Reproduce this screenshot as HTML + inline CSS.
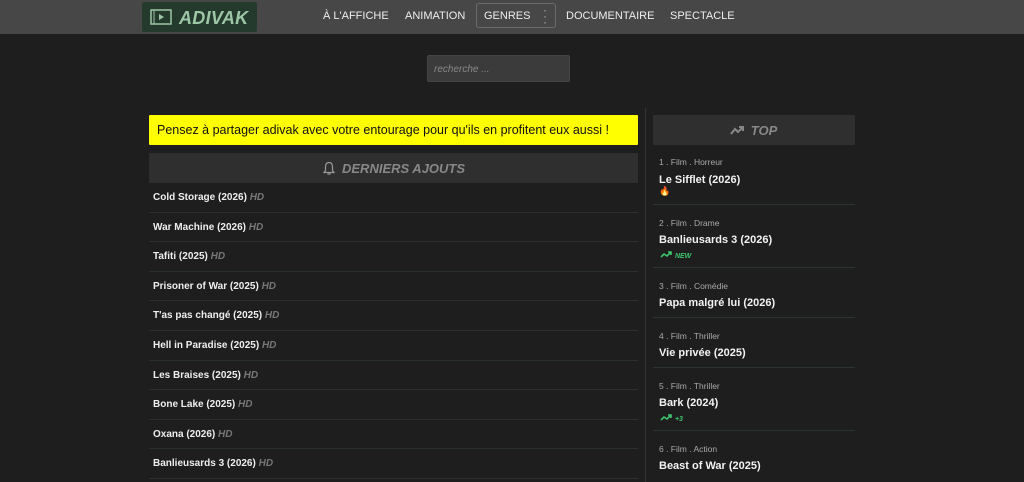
<!DOCTYPE html>
<html><head><meta charset="utf-8"><style>
*{margin:0;padding:0;box-sizing:border-box}
body{width:1024px;height:482px;overflow:hidden;background:#1e1e1e;font-family:"Liberation Sans",Arial,sans-serif;color:#eee;position:relative}
.hdr{position:absolute;left:0;top:0;width:1024px;height:34px;background:#474747}
.logo{position:absolute;left:142px;top:2px;width:115px;height:30px;background:#243a2d;border-radius:2px}
.logo .t{position:absolute;left:37px;top:6px;font-size:18px;font-weight:bold;font-style:italic;color:#9dc7a6;letter-spacing:.3px}
.nav{position:absolute;top:10px;font-size:11px;color:#eee}
.genres{position:absolute;left:476px;top:3px;width:80px;height:25px;border:1px solid #6a6a6a;border-radius:3px}
.search{position:absolute;left:427px;top:55px;width:143px;height:27px;background:#3b3b3b;border:1px solid #444;border-radius:2px;font-size:10px;font-style:italic;color:#888;padding:8px 6px}
.vline{position:absolute;left:645px;top:108px;width:1px;height:374px;background:#333}
.notice{position:absolute;left:149px;top:115px;width:489px;height:30px;background:#ffff00;color:#111;font-size:12.5px;padding:8px 8px;border-radius:1px}
.lh{position:absolute;left:149px;top:153px;width:489px;height:30px;background:#2f2f2f;color:#888;font-weight:bold;font-style:italic;font-size:13px;padding-top:8px}
.row{position:absolute;left:149px;width:489px;height:29.6px;border-bottom:1px solid #2a302c;font-size:10px;font-weight:bold;padding:9px 4px;color:#eee}
.row i{color:#777}
.th{position:absolute;left:653px;top:115px;width:202px;height:30px;background:#2f2f2f;color:#888;font-weight:bold;font-style:italic;font-size:13px;padding-top:8px;text-align:center}
.it{position:absolute;left:659px;font-size:8.5px;color:#aaa}
.tt{position:absolute;left:659px;font-size:11px;font-weight:bold;color:#f2f2f2}
.sep{position:absolute;left:653px;width:202px;height:1px;background:#2b3430}
.tag{position:absolute;left:660px;font-size:7px;font-weight:bold;font-style:italic;color:#3ec46d}
</style></head><body>
<div class="hdr">
 <div class="logo">
  <svg style="position:absolute;left:8px;top:7px" width="22" height="16"><rect x="1" y="1" width="20" height="14" fill="none" stroke="#9dc7a6" stroke-width="1.5"/><line x1="4" y1="1" x2="4" y2="15" stroke="#9dc7a6"/><path d="M9 5 L14 8 L9 11Z" fill="#9dc7a6"/></svg>
  <span class="t">ADIVAK</span>
 </div>
 <span class="nav" style="left:323px">À L'AFFICHE</span>
 <span class="nav" style="left:405px">ANIMATION</span>
 <div class="genres"><span class="nav" style="left:7px;top:6px">GENRES</span><span style="position:absolute;left:66px;top:3px;color:#aaa;font-size:12px;line-height:6px">·<br>·<br>·</span></div>
 <span class="nav" style="left:566px">DOCUMENTAIRE</span>
 <span class="nav" style="left:670px">SPECTACLE</span>
</div>
<div class="search">recherche ...</div>
<div class="vline"></div>
<div class="notice">Pensez à partager adivak avec votre entourage pour qu'ils en profitent eux aussi !</div>
<div class="lh"><svg style="position:absolute;left:174px;top:8px" width="12" height="15"><path d="M6 1.5 C3 1.5 2.5 4 2.5 6 L2.5 9.5 L1 11.5 L11 11.5 L9.5 9.5 L9.5 6 C9.5 4 9 1.5 6 1.5Z M4.5 13 L7.5 13" fill="none" stroke="#999" stroke-width="1.2"/></svg><span style="position:absolute;left:193px;top:8px">DERNIERS AJOUTS</span></div>
<div class="row" style="top:183px">Cold Storage (2026) <i>HD</i></div>
<div class="row" style="top:212.6px">War Machine (2026) <i>HD</i></div>
<div class="row" style="top:242.2px">Tafiti (2025) <i>HD</i></div>
<div class="row" style="top:271.8px">Prisoner of War (2025) <i>HD</i></div>
<div class="row" style="top:301.4px">T'as pas changé (2025) <i>HD</i></div>
<div class="row" style="top:331px">Hell in Paradise (2025) <i>HD</i></div>
<div class="row" style="top:360.6px">Les Braises (2025) <i>HD</i></div>
<div class="row" style="top:390.2px">Bone Lake (2025) <i>HD</i></div>
<div class="row" style="top:419.8px">Oxana (2026) <i>HD</i></div>
<div class="row" style="top:449.4px">Banlieusards 3 (2026) <i>HD</i></div>
<div class="th"><svg style="position:absolute;left:77px;top:10px" width="15" height="10"><path d="M1 9 L5 4 L8 7 L13 2 M9 2 L13 2 L13 6" fill="none" stroke="#888" stroke-width="2"/></svg><span style="margin-left:20px">TOP</span></div>
<div class="it" style="top:157px">1 . Film . Horreur</div><div class="tt" style="top:174px">Le Sifflet (2026)</div><div style="position:absolute;left:659px;top:186px;font-size:9px">🔥</div>
<div class="sep" style="top:204px"></div>
<div class="it" style="top:218px">2 . Film . Drame</div><div class="tt" style="top:234px">Banlieusards 3 (2026)</div><div class="tag" style="top:250px"><svg width="13" height="8"><path d="M1 7 L4 4 L7 6 L11 2 M8 2 L11 2 L11 5" fill="none" stroke="#3ec46d" stroke-width="1.6"/></svg> NEW</div>
<div class="sep" style="top:267px"></div>
<div class="it" style="top:281px">3 . Film . Comédie</div><div class="tt" style="top:297px">Papa malgré lui (2026)</div>
<div class="sep" style="top:317px"></div>
<div class="it" style="top:331px">4 . Film . Thriller</div><div class="tt" style="top:347px">Vie privée (2025)</div>
<div class="sep" style="top:367px"></div>
<div class="it" style="top:381px">5 . Film . Thriller</div><div class="tt" style="top:397px">Bark (2024)</div><div class="tag" style="top:413px"><svg width="13" height="8"><path d="M1 7 L4 4 L7 6 L11 2 M8 2 L11 2 L11 5" fill="none" stroke="#3ec46d" stroke-width="1.6"/></svg> +3</div>
<div class="sep" style="top:430px"></div>
<div class="it" style="top:444px">6 . Film . Action</div><div class="tt" style="top:460px">Beast of War (2025)</div>
</body></html>
